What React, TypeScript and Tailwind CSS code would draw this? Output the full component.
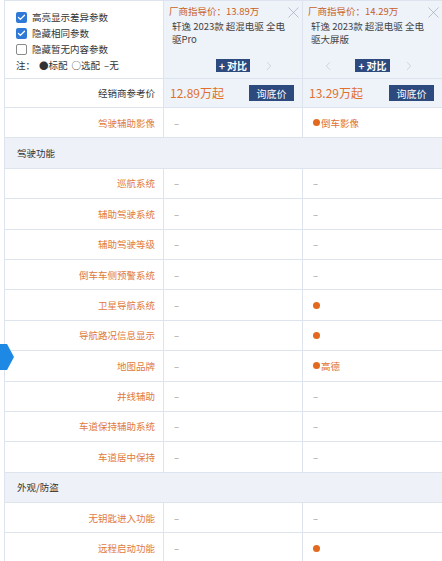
import { X, ChevronLeft, ChevronRight, Check } from "lucide-react";

type Row =
  | { kind: "section"; title: string }
  | { kind: "item"; label: string; a: string; b: string; bDot?: boolean };

const rows: Row[] = [
  { kind: "item", label: "驾驶辅助影像", a: "–", b: "倒车影像", bDot: true },
  { kind: "section", title: "驾驶功能" },
  { kind: "item", label: "巡航系统", a: "–", b: "–" },
  { kind: "item", label: "辅助驾驶系统", a: "–", b: "–" },
  { kind: "item", label: "辅助驾驶等级", a: "–", b: "–" },
  { kind: "item", label: "倒车车侧预警系统", a: "–", b: "–" },
  { kind: "item", label: "卫星导航系统", a: "–", b: "", bDot: true },
  { kind: "item", label: "导航路况信息显示", a: "–", b: "", bDot: true },
  { kind: "item", label: "地图品牌", a: "–", b: "高德", bDot: true },
  { kind: "item", label: "并线辅助", a: "–", b: "–" },
  { kind: "item", label: "车道保持辅助系统", a: "–", b: "–" },
  { kind: "item", label: "车道居中保持", a: "–", b: "–" },
  { kind: "section", title: "外观/防盗" },
  { kind: "item", label: "无钥匙进入功能", a: "–", b: "–" },
  { kind: "item", label: "远程启动功能", a: "–", b: "", bDot: true },
];

const font = { fontFamily: '"Noto Sans CJK SC", "Noto Sans", sans-serif' };

function Checkbox({ checked, label }: { checked: boolean; label: string }) {
  return (
    <div className="flex items-center gap-[5px] h-[16px]">
      {checked ? (
        <span className="w-[11px] h-[11px] rounded-[2px] bg-[#2f7ad6] flex items-center justify-center">
          <Check size={9} strokeWidth={3.5} className="text-white" />
        </span>
      ) : (
        <span className="w-[11px] h-[11px] rounded-[2px] border border-[#8a8a8a] bg-white" />
      )}
      <span className="text-[9.5px] text-[#333]">{label}</span>
    </div>
  );
}

function CarHeader({ price, name, left }: { price: string; name: string; left: boolean }) {
  return (
    <div className="relative bg-[#eef2f9] border-l border-[#dde4ee] pl-[5px] pr-[4px] pt-[3px] flex flex-col">
      <X size={19} strokeWidth={0.8} className="absolute right-[-1px] top-[2px] text-[#9aa3ad]" />
      <div className="text-[9.5px] text-[#c8611f] leading-[14px]">厂商指导价：{price}</div>
      <div className="text-[9.5px] text-[#444] leading-[12.5px] mt-[2px] pl-[3px] pr-[10px]">{name}</div>
      <div className="absolute left-0 right-0 top-[58px] flex items-center justify-center">
        <div className="relative flex items-center">
          {left && (
            <ChevronLeft size={14} strokeWidth={1.5} className="absolute left-[-34px] text-[#c9ced6]" />
          )}
          <span className="bg-[#2c4a7e] text-white text-[10px] font-bold leading-[13px] px-[3px]">+ 对比</span>
          <ChevronRight size={14} strokeWidth={1.5} className="absolute right-[-26px] text-[#c9ced6]" />
        </div>
      </div>
    </div>
  );
}

export default function App() {
  return (
    <div className="w-[442px] h-[561px] overflow-hidden bg-white relative" style={font}>
      <div className="ml-[4px] border-l border-t border-[#dde4ee] grid grid-cols-[158px_139px_140px]">
        <div className="h-[78px] pl-[11px] pt-[8px] flex flex-col border-b border-[#dde4ee]">
          <Checkbox checked label="高亮显示差异参数" />
          <Checkbox checked label="隐藏相同参数" />
          <Checkbox checked={false} label="隐藏暂无内容参数" />
          <div className="text-[9.5px] text-[#333] h-[16px] flex items-center gap-[4px]">
            <span>注：</span>
            <span>●标配</span>
            <span>○选配</span>
            <span>–无</span>
          </div>
        </div>
        <div className="h-[78px] border-b border-[#dde4ee] grid">
          <CarHeader price="13.89万" name="轩逸 2023款 超混电驱 全电驱Pro" left={false} />
        </div>
        <div className="h-[78px] border-b border-[#dde4ee] grid">
          <CarHeader price="14.29万" name="轩逸 2023款 超混电驱 全电驱大屏版" left />
        </div>

        <div className="h-[29px] border-b border-[#dde4ee] flex items-center justify-end pr-[8px] text-[9.5px] text-[#333]">
          经销商参考价
        </div>
        {["12.89万起", "13.29万起"].map((p) => (
          <div
            key={p}
            className="h-[29px] border-b border-l border-[#dde4ee] bg-[#eef3fa] flex items-center pl-[6px] pr-[8px] justify-between"
          >
            <span className="text-[12px] text-[#e0702c]">{p}</span>
            <span className="bg-[#2c4a7e] text-white text-[10px] w-[45px] h-[16px] flex items-center justify-center">
              询底价
            </span>
          </div>
        ))}

        {rows.map((r, i) =>
          r.kind === "section" ? (
            <div
              key={i}
              className="col-span-3 h-[30.4px] bg-[#eef2f8] border-b border-[#dde4ee] flex items-center pl-[12px] text-[9.5px] text-[#333]"
            >
              {r.title}
            </div>
          ) : (
            <div key={i} className="contents">
              <div className="h-[30.4px] border-b border-[#dde4ee] flex items-center justify-end pr-[8px] text-[9.5px] text-[#e07a3c]">
                {r.label}
              </div>
              <div className="h-[30.4px] border-b border-l border-[#dde4ee] flex items-center pl-[10px] text-[9.5px] text-[#9a9a9a]">
                {r.a}
              </div>
              <div className="h-[30.4px] border-b border-l border-[#dde4ee] flex items-center pl-[10px] text-[9.5px]">
                {r.bDot ? (
                  <span className="flex items-center text-[#e0702c]">
                    <span className="w-[7px] h-[7px] rounded-full bg-[#e2691e] mr-[1px]" />
                    {r.b}
                  </span>
                ) : (
                  <span className="text-[#9a9a9a]">{r.b}</span>
                )}
              </div>
            </div>
          )
        )}
      </div>
      <svg className="absolute left-0 top-[344px]" width="15" height="26" viewBox="0 0 15 26">
        <path d="M0 0 H7 L14 13 L7 26 H0 Z" fill="#1e88e5" />
      </svg>
    </div>
  );
}
